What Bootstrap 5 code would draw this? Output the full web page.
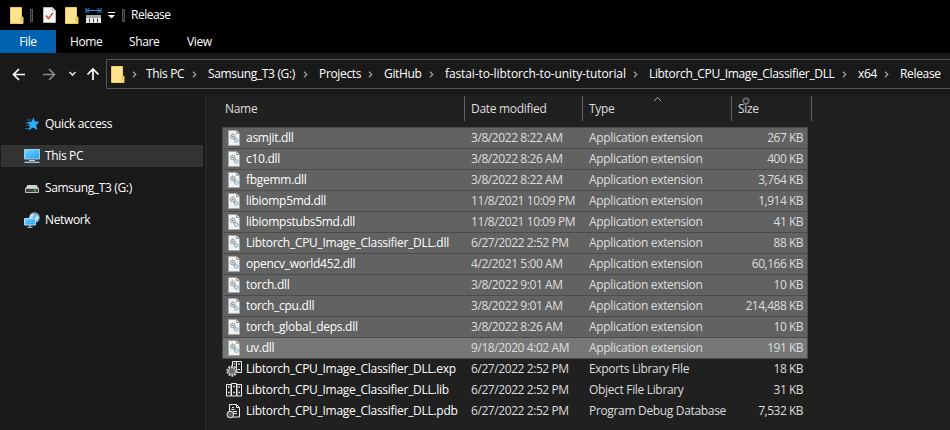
<!DOCTYPE html>
<html lang="en" data-bs-theme="dark">
<head>
<meta charset="utf-8">
<title>Release</title>
<meta name="viewport" content="width=device-width, initial-scale=1">
<link href="https://cdn.jsdelivr.net/npm/bootstrap@5.3.0/dist/css/bootstrap.min.css" rel="stylesheet">
<style>
body{background:#191919;color:#fff;font:12px/16px "Open Sans","Noto Sans",sans-serif;letter-spacing:-.25px;height:430px;overflow:hidden;white-space:nowrap}
svg{display:block;flex:none}
.title-bar{height:30px;background:#000;padding-left:10px}
.title-bar .title-text{margin-left:6px;letter-spacing:-.5px}
.grip{width:3px;height:13px;border:1px solid #555;background:#222}
.ribbon{height:23px;background:#000}
.ribbon .nav-link{color:#fff;padding:0;height:23px;line-height:24px;letter-spacing:-.4px}
.ribbon .nav-link.active{background:#0063b1;width:56px;text-align:center}
.nav-bar{height:43px;padding-left:12px}
.address{height:30px;border:1px solid #535353;border-right:0;width:844px;margin-top:6px;padding-left:4px}
.crumbs{display:grid;grid-template-columns:62px 111px 65px 61px 204px 209px 42px 50px;margin-left:12px;letter-spacing:-.34px}
.crumb svg{margin-right:11px;margin-left:auto}
.crumb.loose{letter-spacing:-.1px}
.side{width:206px;height:334px;border-right:1px solid #2b2b2b;padding:17px 2px 0 1px}
.side .list-group-item{height:22px;margin-bottom:10px;padding:0 0 0 23px;background:none;color:#fff;border:0;gap:5px;letter-spacing:-.35px}
.side .list-group-item:first-child{margin-bottom:10px}
.side .list-group-item.active{background:#333;margin-top:0}
.files{width:744px;background:#202020}
.heads{height:32px;color:#dedede;letter-spacing:-.3px}
.heads>div{height:25px;border-right:1px solid #636363;line-height:25px}
.file{display:grid;grid-template-columns:248px 118px 139px 79px;width:586px;height:21px;margin-left:16px;line-height:20px;color:#dedede;border:1px solid transparent;border-width:0 1px 1px;letter-spacing:-.42px}
.file>:first-child{color:#fff;gap:4px;padding-left:3px;letter-spacing:-.28px}
.file>:nth-child(3){letter-spacing:-.33px}
.file>:last-child{text-align:right;padding-right:4px;letter-spacing:-.5px}
.picked{background:#626262;border-color:#4b4b4b}
.picked.focus-row{background:#777;border-color:#4b4b4b}
.first-row{box-shadow:0 -1px #4b4b4b}
.sort-mark{left:447px;top:0}
.pointer-ring{left:536px;top:1px}
</style>
<script src="https://cdn.jsdelivr.net/npm/bootstrap@5.3.0/dist/js/bootstrap.bundle.min.js"></script>
</head>
<body>
<svg width="0" height="0" class="position-absolute">
<defs>
<linearGradient id="screen" x2="1" y2="1"><stop stop-color="#76d0ff"/><stop offset="1" stop-color="#23a3f5"/></linearGradient>
<symbol id="folder" viewBox="0 0 14 17"><path d="M.5 .5h11v10h1.500v6H.5z" fill="#ffe391"/><path d="M.5 .5h11v9.500h1.500v6.500H.5z" fill="none" stroke="#eccb5d"/><path d="M11 10.500v5" stroke="#d9b23e"/></symbol>
<symbol id="chev" viewBox="0 0 5 7"><path d="M1 .8 3.700 3.500 1 6.200" fill="none" stroke="#999" stroke-width="1.400"/></symbol>
<symbol id="dll" viewBox="0 0 16 16"><path d="M2.500.5h8l3 3v12h-11z" fill="#f3f3f3" stroke="#a9a9a9"/><path d="M10.500.5v3h3" fill="#ddd" stroke="#999"/><circle cx="6.800" cy="6.500" r="2.300" fill="#dfe2e4" stroke="#8c9296" stroke-width="1.200" stroke-dasharray="1.300 .5"/><circle cx="6.800" cy="6.500" r=".8" fill="#7b8185"/><circle cx="10.300" cy="10.500" r="1.800" fill="#d8edf8" stroke="#79abca" stroke-width="1.200" stroke-dasharray="1.200 .4"/><path d="m7.500 8 1.500 1.500" stroke="#8c9296"/></symbol>
<symbol id="exp" viewBox="0 0 16 16"><path d="M6.500.5h4v10h-4zM10.500.5h5v11h-5z" fill="#262626" stroke="#eee"/><path d="M12 3h2M12 8.500h2M7.800 3h1.500" stroke="#eee"/><circle cx="6" cy="10" r="4.800" fill="#222" stroke="#ccc" stroke-width="1.700" stroke-dasharray="2 1"/><circle cx="6" cy="10" r="3.500" fill="#555" stroke="#ddd"/><circle cx="6" cy="10" r="1.300" fill="#222" stroke="#ccc" stroke-width=".6"/></symbol>
<symbol id="lib" viewBox="0 0 16 16"><path d="M.5 2.500h4.500v11.500H.5zM5.500 1.500h5v12.500h-5zM11 2.500h4.500v11.500H11z" fill="#222" stroke="#f1f1f1"/><path d="M2 5h1.500M7.200 4.500h1.600M12.500 5H14M2 10.500h1.500M7.200 10.500h1.600M12.500 10.500H14" stroke="#eee" stroke-width="1.500"/></symbol>
<symbol id="pdb" viewBox="0 0 16 16"><path d="M3.500 1.500h7l3 3v9.500h-10z" fill="#222" stroke="#eee"/><path d="M10.500 1.500v3h3M5.500 6.500h3M7 8.500h4M7 10.500h4M6 4.500h2" fill="none" stroke="#eee"/><circle cx="4.300" cy="11.500" r="3.300" fill="#5d5d5d" stroke="#f1f1f1"/></symbol>
</defs>
</svg>

<header class="title-bar d-flex align-items-center">
<svg width="14" height="17"><use href="#folder"/></svg><span class="grip" style="margin-left:6px"></span>
<svg width="13" height="16" style="margin-left:10px"><path d="M.5.5h9l3 3v12H.5z" fill="#f5f5f5" stroke="#bbb"/><path d="M9.500.5v3h3" fill="none" stroke="#aaa"/><path d="m3 8.500 2.500 3 4.500-5.500" fill="none" stroke="#df562b" stroke-width="1.600"/></svg>
<svg width="14" height="17" style="margin-left:9px"><use href="#folder"/></svg>
<svg width="17" height="17" style="margin-left:6px"><path d="M1 1v5M16 1v5M2 3.500h13M4.500 1 2 3.500 4.500 6M12.500 1 15 3.500 12.500 6" fill="none" stroke="#2996ec"/><path d="M1 8h15v8H1z" fill="#ededed"/><path d="M1 8h15v3H1z" fill="#aaa"/><path d="M4.500 11.500v4M8.500 11.500v4M12.500 11.500v4" stroke="#444"/></svg>
<svg width="7" height="7" style="margin-left:6px"><path d="M0 .5h7" stroke="#fff"/><path d="M0 3h7L3.500 6.500z" fill="#fff"/></svg>
<span class="grip" style="margin-left:7px"></span><span class="title-text">Release</span>
</header>
<nav class="ribbon nav">
<a class="nav-link active">File</a><a class="nav-link" style="margin-left:14px;width:59px">Home</a><a class="nav-link" style="width:58px">Share</a><a class="nav-link">View</a>
</nav>
<div class="nav-bar d-flex">
<svg width="94" height="43" fill="none" stroke-width="1.700"><path d="M1.500 21.500H13M7 16l-5.500 5.500L7 27" stroke="#fff"/><path d="M31 21.500h11.500M37 16l5.500 5.500L37 27" stroke="#8a8a8a"/><path d="m57.500 19 3 3 3-3" stroke="#ddd"/><path d="M81 27V16M75.500 21.500 81 16l5.500 5.500" stroke="#fff"/></svg>
<div class="address d-flex align-items-center">
<svg width="14" height="17"><use href="#folder"/></svg>
<svg width="5" height="7" style="margin-left:7px;margin-right:-3px"><use href="#chev"/></svg>
<div class="crumbs">
<div class="crumb d-flex align-items-center">This PC<svg width="5" height="7"><use href="#chev"/></svg></div>
<div class="crumb d-flex align-items-center">Samsung_T3 (G:)<svg width="5" height="7"><use href="#chev"/></svg></div>
<div class="crumb d-flex align-items-center">Projects<svg width="5" height="7"><use href="#chev"/></svg></div>
<div class="crumb d-flex align-items-center">GitHub<svg width="5" height="7"><use href="#chev"/></svg></div>
<div class="crumb loose d-flex align-items-center">fastai-to-libtorch-to-unity-tutorial<svg width="5" height="7"><use href="#chev"/></svg></div>
<div class="crumb d-flex align-items-center">Libtorch_CPU_Image_Classifier_DLL<svg width="5" height="7"><use href="#chev"/></svg></div>
<div class="crumb d-flex align-items-center">x64<svg width="5" height="7"><use href="#chev"/></svg></div>
<div class="crumb d-flex align-items-center">Release</div>
</div>
</div>
</div>
<main class="d-flex">
<aside class="side">
<div class="list-group list-group-flush">
<a class="list-group-item d-flex align-items-center"><svg width="16" height="16"><path d="m9.500 1.500 1.500 4 4.500.2-3.300 3.300 1 5-4.200-2.500-4.500 3 1.500-5L3 6l4.500-.3z" fill="#2cafff"/><path d="M2.500 4h5M1 7h4M2.500 9.500H6M1 12.500h4" stroke="#1685ca" stroke-width=".8"/></svg>Quick access</a>
<a class="list-group-item active d-flex align-items-center"><svg width="16" height="16"><path d="M.5 1.500h15v9.500H.5z" fill="url(#screen)" stroke="#a5cde7"/><path d="M5 12.500h6" stroke="#ccd7de"/><path d="M0 15l1-1.500h14l1 1.500z" fill="#a9bac8"/></svg>This PC</a>
<a class="list-group-item d-flex align-items-center"><svg width="16" height="16"><path d="m3.500 5h9l2.500 4H1z" fill="#d2d2d2"/><path d="M1.500 8.500h13v4h-13z" fill="#434343" stroke="#bbb"/><path d="M10 10.500h2" stroke="#48df45" stroke-width="1.500"/></svg>Samsung_T3 (G:)</a>
<a class="list-group-item d-flex align-items-center"><svg width="16" height="16"><circle cx="10.500" cy="5.500" r="5.300" fill="#6caed0"/><path d="M7 2c3-2 4 2 2 3s-2 2-4 1zM12 3l3 2-2 4-2-3z" fill="#c4e0ea"/><path d="M.5 6.500h11v6.500H.5z" fill="url(#screen)" stroke="#b4dcf5"/><path d="M6 13v2M3.500 15.300h5" stroke="#cbd6df"/></svg>Network</a>
</div>
</aside>
<section class="files position-relative">
<div class="heads d-flex"><div style="width:259px;padding-left:19px">Name</div><div style="width:118px;padding-left:6px">Date modified</div><div style="width:149px;padding-left:6px">Type</div><div style="width:80px;padding-left:6px">Size</div></div>
<svg class="sort-mark position-absolute" width="9" height="6"><path d="m1 5 3.500-3.500L8 5" fill="none" stroke="#aaa"/></svg>
<svg class="pointer-ring position-absolute" width="8" height="8"><circle cx="4" cy="4" r="2.800" fill="#26262b" stroke="#737379" stroke-width="1.400"/></svg>
<div class="file picked first-row"><div class="d-flex align-items-center"><svg width="16" height="16"><use href="#dll"/></svg>asmjit.dll</div><div>3/8/2022 8:22 AM</div><div>Application extension</div><div>267 KB</div></div>
<div class="file picked"><div class="d-flex align-items-center"><svg width="16" height="16"><use href="#dll"/></svg>c10.dll</div><div>3/8/2022 8:26 AM</div><div>Application extension</div><div>400 KB</div></div>
<div class="file picked"><div class="d-flex align-items-center"><svg width="16" height="16"><use href="#dll"/></svg>fbgemm.dll</div><div>3/8/2022 8:22 AM</div><div>Application extension</div><div>3,764 KB</div></div>
<div class="file picked"><div class="d-flex align-items-center"><svg width="16" height="16"><use href="#dll"/></svg>libiomp5md.dll</div><div>11/8/2021 10:09 PM</div><div>Application extension</div><div>1,914 KB</div></div>
<div class="file picked"><div class="d-flex align-items-center"><svg width="16" height="16"><use href="#dll"/></svg>libiompstubs5md.dll</div><div>11/8/2021 10:09 PM</div><div>Application extension</div><div>41 KB</div></div>
<div class="file picked"><div class="d-flex align-items-center"><svg width="16" height="16"><use href="#dll"/></svg>Libtorch_CPU_Image_Classifier_DLL.dll</div><div>6/27/2022 2:52 PM</div><div>Application extension</div><div>88 KB</div></div>
<div class="file picked"><div class="d-flex align-items-center"><svg width="16" height="16"><use href="#dll"/></svg>opencv_world452.dll</div><div>4/2/2021 5:00 AM</div><div>Application extension</div><div>60,166 KB</div></div>
<div class="file picked"><div class="d-flex align-items-center"><svg width="16" height="16"><use href="#dll"/></svg>torch.dll</div><div>3/8/2022 9:01 AM</div><div>Application extension</div><div>10 KB</div></div>
<div class="file picked"><div class="d-flex align-items-center"><svg width="16" height="16"><use href="#dll"/></svg>torch_cpu.dll</div><div>3/8/2022 9:01 AM</div><div>Application extension</div><div>214,488 KB</div></div>
<div class="file picked"><div class="d-flex align-items-center"><svg width="16" height="16"><use href="#dll"/></svg>torch_global_deps.dll</div><div>3/8/2022 8:26 AM</div><div>Application extension</div><div>10 KB</div></div>
<div class="file picked focus-row"><div class="d-flex align-items-center"><svg width="16" height="16"><use href="#dll"/></svg>uv.dll</div><div>9/18/2020 4:02 AM</div><div>Application extension</div><div>191 KB</div></div>
<div class="file"><div class="d-flex align-items-center"><svg width="16" height="16"><use href="#exp"/></svg>Libtorch_CPU_Image_Classifier_DLL.exp</div><div>6/27/2022 2:52 PM</div><div>Exports Library File</div><div>18 KB</div></div>
<div class="file"><div class="d-flex align-items-center"><svg width="16" height="16"><use href="#lib"/></svg>Libtorch_CPU_Image_Classifier_DLL.lib</div><div>6/27/2022 2:52 PM</div><div>Object File Library</div><div>31 KB</div></div>
<div class="file"><div class="d-flex align-items-center"><svg width="16" height="16"><use href="#pdb"/></svg>Libtorch_CPU_Image_Classifier_DLL.pdb</div><div>6/27/2022 2:52 PM</div><div>Program Debug Database</div><div>7,532 KB</div></div>
</section>
</main>
</body>
</html>
